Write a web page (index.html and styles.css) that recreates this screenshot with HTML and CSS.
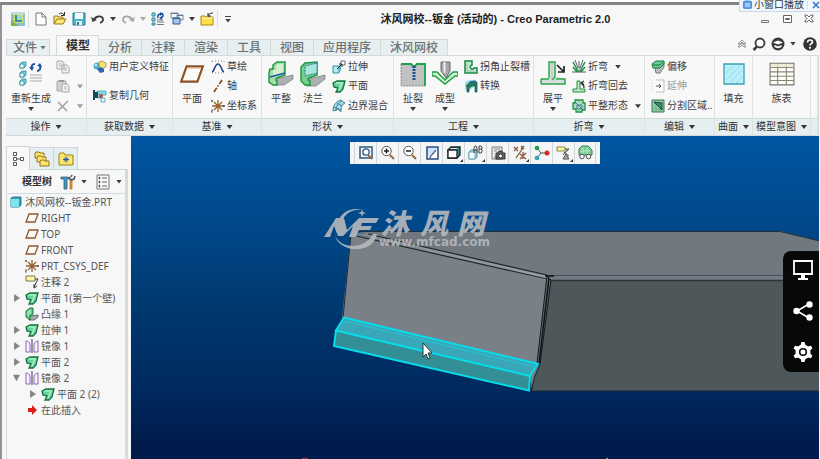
FILE: index.html
```html
<!DOCTYPE html>
<html lang="zh-CN">
<head>
<meta charset="utf-8">
<title>沐风网校--钣金 (活动的) - Creo Parametric 2.0</title>
<link rel="stylesheet" href="styles.css">
</head>
<body>
<svg class="sprite" aria-hidden="true">
  <defs>
    <symbol id="i-app" viewBox="0 0 14 14"><rect width="14" height="14" rx="1" fill="#8cc0dc"/><path d="M0 14V8l8 6z" fill="#7ab648"/><path d="M0 0h14v2H0z" fill="#b9dcea"/><rect x="3" y="2" width="9" height="9" fill="#d9e56a"/><path d="M4 3h2v5h5v2H4z" fill="#3d8f9a"/><path d="M6 3h5v5H6z" fill="#a7d2d0"/></symbol>
    <symbol id="i-new" viewBox="0 0 14 14"><path d="M2 1h6l4 4v8H2z" fill="#fff" stroke="#777"/><path d="M8 1v4h4" fill="none" stroke="#777"/></symbol>
    <symbol id="i-open" viewBox="0 0 14 14"><path d="M1 12V4h4l1 1h4v2" fill="#f5e27a" stroke="#9a7a1c"/><path d="M1 12l3-5h9l-3 5z" fill="#ffe873" stroke="#9a7a1c"/><path d="M6 2c2-1.500 4-1 5 1M11.500 0v3.500H8" fill="none" stroke="#333"/></symbol>
    <symbol id="i-save" viewBox="0 0 14 14"><path d="M1 1h12v12H1z" fill="#49b5c6" stroke="#2c7c8d"/><path d="M3 1h8v6H3z" fill="#f4fbfc"/><path d="M4 9h6v4H4z" fill="#e7eef0"/><path d="M5 10h2v3H5z" fill="#2c7c8d"/></symbol>
    <symbol id="i-undo" viewBox="0 0 14 14"><path d="M3 8c1-4 8-5 9-1 .500 2-1 3-3 4" fill="none" stroke="currentColor" stroke-width="1.800"/><path d="M0 5l1.500 5L6 8z" fill="currentColor"/></symbol>
    <symbol id="i-regen-sm" viewBox="0 0 14 14"><path d="M1 1h3v3H1zM1 6h3v3H1zM1 11h3v2H1z" fill="#a8e4ec" stroke="#2a7f93"/><path d="M6 8h6M6 10h7M6 12.500h7" stroke="#777"/><path d="M7 6c-1-3 1-4 3-4M11 1c2 2 1 4-1 5" fill="none" stroke="#174f9e" stroke-width="1.500"/><path d="M9 0l3 2-3 2zM11 4l-3 2 3 2z" fill="#174f9e"/></symbol>
    <symbol id="i-windows" viewBox="0 0 14 14"><path d="M1 1h7v5H1zM7 3h6v5H7z" fill="#f2f5f8" stroke="#7c8896"/><path d="M1 1h7v1H1zM7 3h6v1H7z" fill="#68798c"/><path d="M3 6h7v6H3z" fill="#a4c6ea" stroke="#2c5c96"/><path d="M3 6h7v1H3z" fill="#2c5c96"/></symbol>
    <symbol id="i-closefolder" viewBox="0 0 14 14"><path d="M1 4h4l1 1h7v8H1z" fill="#ffe04b" stroke="#a98514"/><path d="M2 7l2-1h9" stroke="#fff6b5" fill="none"/><path d="M8 5c0-3 2-4 5-4M8 1v3h3" fill="none" stroke="#333"/></symbol>
    <symbol id="i-tv" viewBox="0 0 12 12"><path d="M3 0l2 2M9 0L7 2" stroke="#4b87c8" fill="none"/><rect x="1" y="2" width="10" height="9" rx="2" fill="#4d93dc"/><rect x="3" y="4" width="6" height="5" fill="#9cc8f2"/></symbol>
    <symbol id="i-search" viewBox="0 0 14 14"><circle cx="8" cy="6" r="4.500" fill="#fff" stroke="#3c3c3c" stroke-width="1.800"/><path d="M5 9.500l-3.500 3.500" stroke="#3c3c3c" stroke-width="2.500"/></symbol>
    <symbol id="i-learn" viewBox="0 0 14 14"><circle cx="7" cy="7" r="6.500" fill="#3a3a3a"/><path d="M2 5.500l5-2 5 2-5 2z" fill="#fff"/><path d="M3.500 8v2c2 1.500 5 1.500 7 0V8L7 9.500z" fill="#fff"/></symbol>
    <symbol id="i-help" viewBox="0 0 14 14"><circle cx="7" cy="7" r="6.800" fill="#333"/><path d="M4.500 5.500c0-3.500 5-3 5-.500 0 1.500-2.500 1.700-2.500 3.500" fill="none" stroke="#fff" stroke-width="1.700"/><circle cx="7" cy="10.800" r="1.100" fill="#fff"/></symbol>
    <symbol id="i-regen" viewBox="0 0 26 26"><g stroke="#2a8598" stroke-width=".8"><path d="M2 3l2-2h4v4L6 7H2z" fill="#79dbe6"/><path d="M2 3h4v4H2z" fill="#eafcff"/><path d="M2 12l2-2h4v4l-2 2H2z" fill="#79dbe6"/><path d="M2 12h4v4H2z" fill="#eafcff"/><path d="M2 20l2-2h4v4l-2 2H2z" fill="#79dbe6"/><path d="M2 20h4v4H2z" fill="#eafcff"/></g><path d="M12 14h12M12 17h12M12 20h12" stroke="#a5abb2"/><path d="M14 8c-1-3 0-5 3-5M22 4c1 3 0 6-3 6" fill="none" stroke="#174fa4" stroke-width="2"/><path d="M11 6l3 4 2-4zM24 6l-2-4-3 3z" fill="#174fa4"/></symbol>
    <symbol id="i-copy" viewBox="0 0 14 14"><path d="M1 1h5l2 2v6H1zM6 5h5l2 2v6H6z" fill="#f1f1f1" stroke="#a9a9a9"/><path d="M3 4h3M3 6h3M8 8h3M8 10h3" stroke="#b5b5b5"/></symbol>
    <symbol id="i-paste" viewBox="0 0 14 14"><path d="M1 2h9v10H1z" fill="#d2d2d2" stroke="#a6a6a6"/><path d="M3 1h5v2H3z" fill="#999"/><path d="M6 5h5l2 2v6H6z" fill="#f4f4f4" stroke="#a6a6a6"/><path d="M8 8h3M8 10h3" stroke="#b5b5b5"/></symbol>
    <symbol id="i-del" viewBox="0 0 14 14"><path d="M2 3l9 9M12 2L2 12" stroke="#9f9f9f" stroke-width="1.500"/></symbol>
    <symbol id="i-udf" viewBox="0 0 14 14"><circle cx="4" cy="6" r="3.500" fill="#49b2cd"/><circle cx="3" cy="5" r="1.300" fill="#bdebf5"/><path d="M6 2l3-1 4 2v4L9 9 6 7z" fill="#f3df72" stroke="#998224" stroke-width=".7"/><path d="M4 9l4-2 3 2v3l-4 1z" fill="#2f67b2"/></symbol>
    <symbol id="i-copygeo" viewBox="0 0 14 14"><path d="M4 2h9v4H9v3H4z" fill="#7fdbe6" stroke="#4a9cab" stroke-width=".8"/><path d="M0 1h2v10H0zM2 3h3v6H2z" fill="#17465c"/><path d="M6 5l3 3M9 5v3H6" stroke="#bb3f2f" stroke-width="1.300" fill="none"/><path d="M8 9h4v4H8z" fill="#dff8fb" stroke="#4a9cab" stroke-width=".8"/></symbol>
    <symbol id="i-plane" viewBox="0 0 24 18"><path d="M7 2h15l-5 14H2z" fill="#fdfbf8" stroke="#8c5226" stroke-width="2"/><path d="M8 3.500h12" stroke="#d7ab84"/></symbol>
    <symbol id="i-sketch" viewBox="0 0 14 14"><path d="M1 1h12M1 13h12M1 1v3M13 1v3" stroke="#888" stroke-dasharray="1 2"/><path d="M1 12C3 12 4 4 7 4s4 8 6 8" fill="none" stroke="#1c3f88" stroke-width="1.500"/></symbol>
    <symbol id="i-axis" viewBox="0 0 14 14"><path d="M3 13L11 1" stroke="#8d5427" stroke-width="1.800" stroke-dasharray="5 1.500 1.500 1.500"/></symbol>
    <symbol id="i-csys" viewBox="0 0 14 14"><path d="M7 1v12M1 7h12M3 3l8 8M11 3l-8 8" stroke="#94602f" stroke-width="1.300"/><path d="M0 1l2 2M2 1L0 3M12 6l2 2M14 6l-2 2M0 11h2l-2 2h2" stroke="#555" stroke-width=".8" fill="none"/></symbol>
    <symbol id="i-flat" viewBox="0 0 26 26"><path d="M8 18l17-4v4l-9 6H5z" fill="#aeb1b2" stroke="#737777" stroke-width=".7"/><path d="M2 8h3V4l4-3h8v13l-8 3c-2 1-1 3 0 3v4H5l-4-3v-9z" fill="#a4dfa9" stroke="#209a49" stroke-width="1.500"/><path d="M5 9h3V5l2-2h5v10L5 16z" fill="#d3f0d0"/><path d="M2 16l15-4" stroke="#2158a1" stroke-width="1.500"/></symbol>
    <symbol id="i-flange" viewBox="0 0 26 26"><path d="M9 18l16-4v4l-9 7H6z" fill="#aeb1b2" stroke="#737777" stroke-width=".7"/><path d="M1 6l4-4 12-1v13l-8 3c-2 1-1 3 1 3v4H5l-4-4z" fill="#79cf8a" stroke="#209a49" stroke-width="1.500"/><path d="M5 5l12-3v10L5 15z" fill="#a7e7dc" stroke="#2f78a7" stroke-dasharray="2 1"/></symbol>
    <symbol id="i-extrude" viewBox="0 0 14 14"><path d="M1 6h6v7H1z" fill="#b8ebf1" stroke="#2f8fa1"/><path d="M7 6l2-2v6l-2 3z" fill="#50b4c4"/><path d="M9 1h4v4H9z" fill="#fff" stroke="#667"/><path d="M5 9l5-5M7 4h3v3" fill="none" stroke="#333"/></symbol>
    <symbol id="i-planar" viewBox="0 0 14 14"><path d="M1 4l4-2h8l-2 8-3 3H4l2-4-4-1z" fill="#6cd49a" stroke="#14713f" stroke-width="1.300"/><path d="M4 4h6L7 11" fill="none" stroke="#a8efc4" stroke-width="1.500"/></symbol>
    <symbol id="i-blend" viewBox="0 0 14 14"><path d="M1 12C1 6 4 2 9 1l4 3c-3 1-4 4-4 9L6 10z" fill="#a9dfeb" stroke="#4b8798"/><path d="M4 12c0-5 2-8 6-10M2 8l7 3M5 4l5 3" stroke="#37819b" fill="none"/></symbol>
    <symbol id="i-rip" viewBox="0 0 26 26"><path d="M1 3h11l2 3 2-3h9v22H1z" fill="#bfc1c2" stroke="#8a8e8e" stroke-dasharray="2 1"/><path d="M1 3h10l3 3 3-3h8v22" fill="none" stroke="#1ca24a" stroke-width="1.800"/><path d="M14 5v14" fill="none" stroke="#1d5190" stroke-width="3" stroke-dasharray="2 1"/></symbol>
    <symbol id="i-form" viewBox="0 0 26 26"><path d="M9 1h9v9l-4 7-5-7z" fill="#a4a8ab" stroke="#62676b"/><path d="M12.500 1v11" stroke="#e8eaeb" stroke-width="2"/><path d="M0 11h5l8 8 8-8h5v4h-3l-10 8L3 15H0z" fill="#d5f1ce" stroke="#1c9d47" stroke-width="1.500"/></symbol>
    <symbol id="i-corner" viewBox="0 0 14 14"><path d="M1 1h7v4a2 2 0 1 0 2 3h3v5H1z" fill="#c7e8cb" stroke="#168843" stroke-width="1.500"/><path d="M3 3v8h8" fill="none" stroke="#a5bbac"/></symbol>
    <symbol id="i-convert" viewBox="0 0 14 14"><path d="M1 3l4-2h5v7l-4 3H1z" fill="#9de0e9"/><path d="M2 7l4-4h7v10h-2V7H8L5 9v4H3V8z" fill="#257d60" stroke="#1a5345" stroke-width=".7"/><path d="M6 3l6-1" stroke="#2b67a8" stroke-width="1.500"/></symbol>
    <symbol id="i-unbend" viewBox="0 0 26 26"><path d="M9 1h6v15l10 1v6H1v-6h8z" fill="#d9dddb"/><path d="M9 17V1h6v14c0 2-1 2-3 4M1 18h8M1 23h24v-5h-9M1 18v5" fill="none" stroke="#2aa94c" stroke-width="1.500"/><path d="M12 2v16" stroke="#a7b1ab" stroke-dasharray="2 1"/><path d="M17 4l6 6M24 5v6h-6" fill="none" stroke="#222" stroke-width="1.700"/></symbol>
    <symbol id="i-bend" viewBox="0 0 14 14"><path d="M1 2l5 9h2l5-9M1 7l4 5M13 7l-4 5" fill="none" stroke="#258c49" stroke-width="1.500"/><path d="M7 1v8M3 0l3 8M11 0L8 8M0 12h14" stroke="#4e646c" fill="none"/></symbol>
    <symbol id="i-bendback" viewBox="0 0 14 14"><path d="M5 2h3v8h5v3H1v-3h4z" fill="#c2e5c8" stroke="#1d8f45"/><path d="M12 9c0-3-1-5-3-5M12 2L9 4l3 3" fill="none" stroke="#333" stroke-width="1.300"/></symbol>
    <symbol id="i-flatpat" viewBox="0 0 14 14"><path d="M3 1h8v3h2v7h-3v2H4v-3H1V4h2z" fill="#a9deb8" stroke="#21924a" stroke-width="1.300"/><path d="M3 3l8 8M5 6h5v4H5z" stroke="#4479a3" fill="none"/></symbol>
    <symbol id="i-offset" viewBox="0 0 14 14"><path d="M4 9l2-2h3l4-4v4l-4 6H5z" fill="#b9bebe" stroke="#737b7b"/><path d="M1 4l4-3h8v3L9 8H2z" fill="#69d094" stroke="#147241"/><path d="M2 5h7l3-3" fill="none" stroke="#147241"/></symbol>
    <symbol id="i-extend" viewBox="0 0 14 14"><path d="M5 1h8v12H5" fill="#fafafa" stroke="#c0c0c0"/><path d="M1 1v12" stroke="#ccc" stroke-dasharray="1 2"/><path d="M5 7h5M8 5l2 2-2 2" fill="none" stroke="#555"/></symbol>
    <symbol id="i-split" viewBox="0 0 14 14"><path d="M1 1h12v12H1z" fill="#82d3a1" stroke="#38765a"/><path d="M5 1v12M9 1v12M1 4h12M1 10h12" stroke="#6d8b7d" stroke-dasharray="1 1"/><path d="M3 3l8 1v7z" fill="#3a8a68" stroke="#244f47"/></symbol>
    <symbol id="i-fill" viewBox="0 0 22 22"><path d="M1 1h20v20H1z" fill="#b9effa" stroke="#3a9fb8" stroke-width="1.300"/><path d="M3 10l7-7M3 17L17 3M7 19L19 7M13 20l7-7" stroke="#8edbea"/></symbol>
    <symbol id="i-table" viewBox="0 0 24 24"><path d="M1 2h22v20H1z" fill="#fffef6" stroke="#747468"/><path d="M1 6h22M1 10h22M1 14h22M1 18h22M8 2v20M16 2v20" stroke="#86867b" fill="none"/><path d="M2 3h20v2H2z" fill="#e9e6c6"/></symbol>
    <symbol id="i-tree" viewBox="0 0 14 14"><path d="M2.500.5h3v3h-3zM2.500 5.500h3v3h-3zM9.500 5.500h3v3h-3zM2.500 10.500h3v3h-3z" fill="#fff" stroke="#555"/><path d="M6 7h3" stroke="#555"/></symbol>
    <symbol id="i-folders" viewBox="0 0 16 16"><g fill="#ffe36a" stroke="#8e7420"><path d="M1 2l1-1h3l1 1h4v5H1z"/><path d="M3 6l1-1h3l1 1h4v5H3z"/><path d="M6 10l1-1h3l1 1h4v5H6z"/></g></symbol>
    <symbol id="i-fav" viewBox="0 0 16 16"><path d="M1 3l1-1h4l1 2h8v10H1z" fill="#ffe869" stroke="#9b8020"/><path d="M8 5.500v6M5 8.500h6M6 6.500l4 4M10 6.500l-4 4" stroke="#2554b0"/></symbol>
    <symbol id="i-tools" viewBox="0 0 16 16"><path d="M1 3h7l2 2H7v10H4V5H1z" fill="#4098c4" stroke="#41586d" stroke-width=".8"/><path d="M10 6h2v9h-2z" fill="#f29a28" stroke="#a86213" stroke-width=".7"/><path d="M9 3l2 3 3-1 1-3M12 1l-1 2" fill="none" stroke="#565b60" stroke-width="1.600"/></symbol>
    <symbol id="i-list" viewBox="0 0 16 16"><path d="M2 1h12v14H2z" fill="#f7f7f7" stroke="#777"/><path d="M7 4h5M7 8h5M7 12h5" stroke="#666"/><path d="M4 3h1v2H4zM4 7h1v2H4zM4 11h1v2H4z" fill="#333" stroke="#555" stroke-width=".5"/></symbol>
    <symbol id="i-part" viewBox="0 0 14 14"><path d="M2 3l2-1h8v8l-2 2H2z" fill="#3a9cb2" stroke="#2a7f92"/><path d="M2 4h8v8H2z" fill="#7ce3f0"/></symbol>
    <symbol id="i-datum" viewBox="0 0 14 14"><path d="M4 3h9l-3 8H1z" fill="#fffdf9" stroke="#8e572e" stroke-width="1.300"/></symbol>
    <symbol id="i-note" viewBox="0 0 14 14"><path d="M1 1h9v5H1z" fill="#faf7a6" stroke="#7c7a4a"/><path d="M10 4h3l-4 8M9 9v4l3-2" fill="none" stroke="#333"/></symbol>
    <symbol id="i-bulge" viewBox="0 0 14 14"><path d="M5 9l8-1v2l-4 3H4z" fill="#a8adad" stroke="#606969"/><path d="M1 4l4-3h3v6L5 9v4L1 10z" fill="#62c888" stroke="#177641"/><path d="M3 4v5M5 3v4" stroke="#d3f4da"/></symbol>
    <symbol id="i-mirror" viewBox="0 0 14 14"><path d="M1 2c2 0 3 1 4 3v8H1zM13 2c-2 0-3 1-4 3v8h4z" fill="#f8f2fc" stroke="#8c60b1"/><path d="M7 0v14" stroke="#5d6470" stroke-width="1.300"/></symbol>
    <symbol id="i-insert" viewBox="0 0 14 14"><path d="M3 5h4V2l5 5-5 5V9H3z" fill="#d82019"/></symbol>
    <symbol id="v-fit" viewBox="0 0 16 16"><path d="M2 2h12v11H2z" fill="#f4f8fc" stroke="#31577d" stroke-width="1.500"/><circle cx="8" cy="7" r="3.200" fill="#fff" stroke="#31577d" stroke-width="1.300"/><path d="M10 10l4 4" stroke="#9d683b" stroke-width="2"/></symbol>
    <symbol id="v-in" viewBox="0 0 16 16"><circle cx="6.500" cy="6" r="4.700" fill="#fff" stroke="#555"/><path d="M4 6h5M6.500 3.500v5" stroke="#222" stroke-width="1.500"/><path d="M10 10l4 4" stroke="#9d683b" stroke-width="2"/></symbol>
    <symbol id="v-out" viewBox="0 0 16 16"><circle cx="6.500" cy="6" r="4.700" fill="#fff" stroke="#555"/><path d="M4 6h5" stroke="#222" stroke-width="1.500"/><path d="M10 10l4 4" stroke="#9d683b" stroke-width="2"/></symbol>
    <symbol id="v-repaint" viewBox="0 0 16 16"><path d="M3 2h11v12H3z" fill="#cfe4fa" stroke="#2c4d80" stroke-width="1.500"/><path d="M4 11l6-3 3-4v9H4z" fill="#fff"/><path d="M6 12l6-7M5 13h2" stroke="#5e6e91" stroke-width="1.500"/></symbol>
    <symbol id="v-style" viewBox="0 0 16 16"><path d="M2 5l3-3h9v8l-3 3H2z" fill="#298b99" stroke="#222" stroke-width="1.300"/><path d="M2 5h9v8H2z" fill="#fff" stroke="#222" stroke-width="1.300"/><path d="M4 4l1-1h7l-1 1z" fill="#c6edf0"/></symbol>
    <symbol id="v-saved" viewBox="0 0 16 16"><path d="M1 7l2-2h6v7l-2 2H1z" fill="#a0dce5" stroke="#4c93a1"/><path d="M1 7h6v7H1z" fill="#fafdff" stroke="#6aa6b4"/><path d="M6 8V3l1-2h1l1 2v5M6 5h3M11 8V1h2l1 1v2h-3M13 4l1 1v2l-1 1h-2" fill="none" stroke="#444"/></symbol>
    <symbol id="v-camera" viewBox="0 0 16 16"><path d="M2 2h10v12H2z" fill="#eee" stroke="#777"/><path d="M4 4h6M4 6h3M4 12h3" stroke="#888"/><path d="M6 8h2l1-2h3l1 2h2v6H6z" fill="#666" stroke="#333"/><circle cx="10.500" cy="11" r="2" fill="#fff" stroke="#333"/></symbol>
    <symbol id="v-datum" viewBox="0 0 16 16"><path d="M2 2l4 4M6 2L2 6M9 1l3 3M12 1l-3 3M4 13L11 3M8 9l6 5M14 8l-6 6M11 7v7" stroke="#8b5635" stroke-width="1.300"/></symbol>
    <symbol id="v-spin" viewBox="0 0 16 16"><path d="M3 3l4 5M3 13l4-5h6" stroke="#555" fill="none"/><circle cx="3" cy="3" r="2.300" fill="#1f9c4c"/><circle cx="3" cy="13" r="2.300" fill="#2da6bb"/><circle cx="13" cy="8" r="2.500" fill="#d62626"/></symbol>
    <symbol id="v-annot" viewBox="0 0 16 16"><path d="M1 2h8v4H1z" fill="#fbf6a0" stroke="#8b874a"/><path d="M9 4h4L7 10M8 7l5 4M7 14h6l-3-5z" fill="#aaa" stroke="#555"/></symbol>
    <symbol id="v-glass" viewBox="0 0 16 16"><path d="M2 4l3-3h6l4 4v5H2z" fill="#7ed098" stroke="#29814a"/><path d="M3 6h10M6 2v7M10 2v7" stroke="#b5e4c3"/><circle cx="5" cy="11.500" r="2.300" fill="#eee" stroke="#555"/><circle cx="11.500" cy="11.500" r="2.300" fill="#eee" stroke="#555"/></symbol>
  </defs>
</svg>

<div class="app">
  <header class="titlebar">
    <div class="quick">
      <svg class="i14"><use href="#i-app"/></svg>
      <span class="sep"></span>
      <button aria-label="新建"><svg class="i14"><use href="#i-new"/></svg></button>
      <button aria-label="打开"><svg class="i14"><use href="#i-open"/></svg></button>
      <button aria-label="保存"><svg class="i14"><use href="#i-save"/></svg></button>
      <button aria-label="撤消"><svg class="i14"><use href="#i-undo"/></svg><i class="caret"></i></button>
      <button class="redo" aria-label="重做"><svg class="i14 flip"><use href="#i-undo"/></svg><i class="caret"></i></button>
      <button aria-label="重新生成"><svg class="i14"><use href="#i-regen-sm"/></svg></button>
      <button aria-label="窗口"><svg class="i14"><use href="#i-windows"/></svg><i class="caret"></i></button>
      <button aria-label="关闭"><svg class="i14"><use href="#i-closefolder"/></svg></button>
      <span class="sep"></span>
      <button class="more" aria-label="自定义"><i class="caret"></i></button>
    </div>
    <h1>沐风网校--钣金 (活动的) - Creo Parametric 2.0</h1>
    <div class="winctl">
      <button aria-label="最小化"><svg class="i10" viewBox="0 0 10 10"><path d="M1.500 6.500h7v2h-7z" fill="#fff" stroke="#777"/></svg></button>
      <button aria-label="还原"><svg class="i10" viewBox="0 0 10 10"><path d="M1.500 1.500h8v7h-8zM3.500 4.500h4v1h-4z" fill="#fff" stroke="#666"/></svg></button>
      <button aria-label="关闭窗口"><svg class="i10" viewBox="0 0 10 10"><path d="M1 1h2l2 2 2-2h2v1L7 4.500 9 7v1H7L5 6 3 8H1V7l2-2.500L1 2z" fill="#fff" stroke="#666"/></svg></button>
    </div>
  </header>

  <nav class="tabs">
    <button class="file">文件<i class="caret"></i></button>
    <button class="active">模型</button>
    <button>分析</button><button>注释</button><button>渲染</button><button>工具</button><button>视图</button><button>应用程序</button><button>沐风网校</button>
    <div class="helpers">
      <button aria-label="收起"><svg class="i10" viewBox="0 0 10 10"><path d="M1 5l4-4 4 4H7L5 3 3 5zM1 8l4-4 4 4H7L5 6 3 8z" fill="#fff" stroke="#777" stroke-width=".8"/></svg></button>
      <button aria-label="搜索"><svg class="i14"><use href="#i-search"/></svg></button>
      <button aria-label="学习"><svg class="i14"><use href="#i-learn"/></svg><i class="caret"></i></button>
      <button aria-label="帮助"><svg class="i14"><use href="#i-help"/></svg></button>
    </div>
  </nav>

  <section class="ribbon">
    <div class="group">
      <div class="body">
        <button class="big wide"><svg class="i26"><use href="#i-regen"/></svg>重新生成<i class="caret"></i></button>
        <div class="col">
          <button aria-label="复制"><svg class="i14"><use href="#i-copy"/></svg></button>
          <button class="off" aria-label="粘贴"><svg class="i14"><use href="#i-paste"/></svg><i class="caret"></i></button>
          <button class="off" aria-label="删除"><svg class="i14"><use href="#i-del"/></svg><i class="caret"></i></button>
        </div>
      </div>
      <button class="name">操作<i class="caret"></i></button>
    </div>
    <div class="group">
      <div class="body">
        <div class="col two">
          <button><svg class="i14"><use href="#i-udf"/></svg>用户定义特征</button>
          <button><svg class="i14"><use href="#i-copygeo"/></svg>复制几何</button>
        </div>
      </div>
      <button class="name">获取数据<i class="caret"></i></button>
    </div>
    <div class="group">
      <div class="body">
        <button class="big"><svg class="i26"><use href="#i-plane"/></svg>平面</button>
        <div class="col">
          <button><svg class="i14"><use href="#i-sketch"/></svg>草绘</button>
          <button><svg class="i14"><use href="#i-axis"/></svg>轴</button>
          <button><svg class="i14"><use href="#i-csys"/></svg>坐标系</button>
        </div>
      </div>
      <button class="name">基准<i class="caret"></i></button>
    </div>
    <div class="group">
      <div class="body">
        <button class="big"><svg class="i26"><use href="#i-flat"/></svg>平整</button>
        <button class="big"><svg class="i26"><use href="#i-flange"/></svg>法兰</button>
        <div class="col">
          <button><svg class="i14"><use href="#i-extrude"/></svg>拉伸</button>
          <button><svg class="i14"><use href="#i-planar"/></svg>平面</button>
          <button><svg class="i14"><use href="#i-blend"/></svg>边界混合</button>
        </div>
      </div>
      <button class="name">形状<i class="caret"></i></button>
    </div>
    <div class="group">
      <div class="body">
        <button class="big"><svg class="i26"><use href="#i-rip"/></svg>扯裂<i class="caret"></i></button>
        <button class="big"><svg class="i26"><use href="#i-form"/></svg>成型<i class="caret"></i></button>
        <div class="col">
          <button><svg class="i14"><use href="#i-corner"/></svg>拐角止裂槽</button>
          <button><svg class="i14"><use href="#i-convert"/></svg>转换</button>
        </div>
      </div>
      <button class="name">工程<i class="caret"></i></button>
    </div>
    <div class="group">
      <div class="body">
        <button class="big"><svg class="i26"><use href="#i-unbend"/></svg>展平<i class="caret"></i></button>
        <div class="col">
          <button><svg class="i14"><use href="#i-bend"/></svg>折弯<i class="caret"></i></button>
          <button><svg class="i14"><use href="#i-bendback"/></svg>折弯回去</button>
          <button><svg class="i14"><use href="#i-flatpat"/></svg>平整形态<i class="caret"></i></button>
        </div>
      </div>
      <button class="name">折弯<i class="caret"></i></button>
    </div>
    <div class="group">
      <div class="body">
        <div class="col">
          <button><svg class="i14"><use href="#i-offset"/></svg>偏移</button>
          <button class="off"><svg class="i14"><use href="#i-extend"/></svg>延伸</button>
          <button><svg class="i14"><use href="#i-split"/></svg>分割区域..</button>
        </div>
      </div>
      <button class="name">编辑<i class="caret"></i></button>
    </div>
    <div class="group">
      <div class="body center"><button class="big"><svg class="i26 inset"><use href="#i-fill"/></svg>填充</button></div>
      <button class="name">曲面<i class="caret"></i></button>
    </div>
    <div class="group">
      <div class="body center"><button class="big"><svg class="i26"><use href="#i-table"/></svg>族表</button></div>
      <button class="name">模型意图<i class="caret"></i></button>
    </div>
    <div class="group"><div class="body"></div><div class="name"></div></div>
  </section>

  <main class="work">
    <aside class="side">
      <div class="sidetabs">
        <button class="active" aria-label="模型树"><svg class="i14"><use href="#i-tree"/></svg></button>
        <button aria-label="文件夹浏览器"><svg class="i16"><use href="#i-folders"/></svg></button>
        <button aria-label="收藏夹"><svg class="i16"><use href="#i-fav"/></svg></button>
      </div>
      <div class="panel">
        <div class="panelhead">
          <h2>模型树</h2>
          <button aria-label="设置"><svg class="i16"><use href="#i-tools"/></svg><i class="caret"></i></button>
          <button aria-label="显示"><svg class="i16"><use href="#i-list"/></svg><i class="caret"></i></button>
        </div>
        <ul class="tree">
          <li class="root"><svg class="i14"><use href="#i-part"/></svg>沐风网校--钣金.PRT</li>
          <li><i></i><svg class="i14"><use href="#i-datum"/></svg>RIGHT</li>
          <li><i></i><svg class="i14"><use href="#i-datum"/></svg>TOP</li>
          <li><i></i><svg class="i14"><use href="#i-datum"/></svg>FRONT</li>
          <li><i></i><svg class="i14"><use href="#i-csys"/></svg>PRT_CSYS_DEF</li>
          <li><i></i><svg class="i14"><use href="#i-note"/></svg>注释 2</li>
          <li><i class="shut"></i><svg class="i14"><use href="#i-planar"/></svg>平面 1(第一个壁)</li>
          <li><i></i><svg class="i14"><use href="#i-bulge"/></svg>凸缘 1</li>
          <li><i class="shut"></i><svg class="i14"><use href="#i-planar"/></svg>拉伸 1</li>
          <li><i class="shut"></i><svg class="i14"><use href="#i-mirror"/></svg>镜像 1</li>
          <li><i class="shut"></i><svg class="i14"><use href="#i-planar"/></svg>平面 2</li>
          <li><i class="open"></i><svg class="i14"><use href="#i-mirror"/></svg>镜像 2</li>
          <li class="child"><i class="shut"></i><svg class="i14"><use href="#i-planar"/></svg>平面 2 (2)</li>
          <li><i></i><svg class="i14"><use href="#i-insert"/></svg>在此插入</li>
        </ul>
      </div>
    </aside>

    <section class="view">
      <svg class="scene" viewBox="131 136 688 323" preserveAspectRatio="xMinYMin slice">
        <defs>
          <linearGradient id="bevel" x1="0" y1="0" x2="0" y2="1"><stop offset="0" stop-color="#848b93"/><stop offset="1" stop-color="#9aa1aa"/></linearGradient>
        </defs>
        <path d="M354 231H780L820 241V278H547z" fill="#717880"/>
        <path d="M352 231.500H780L820 241" fill="none" stroke="#22303c"/>
        <path d="M547 275H820V282H547z" fill="#747a83"/>
        <path d="M547 275.500H820" stroke="#454c53"/>
        <path d="M547 281H820V391H532z" fill="#4e5759"/>
        <path d="M551 280.500H820" stroke="#2e3338" stroke-width="1.500"/>
        <path d="M532 391H820" stroke="#182a3c"/>
        <path d="M351 233L547 278 538 365 342 318z" fill="#7a8088"/>
        <path d="M352 233l20 1 175 42-1 4z" fill="url(#bevel)"/>
        <path d="M368 234l179 41M352 235l195 44" fill="none" stroke="#22262b" stroke-width="1.200"/>
        <path d="M351 234l-8 84" stroke="#1c2935"/>
        <path d="M547 276l-10 87 3 1 11-84z" fill="#646b71" stroke="#15191c"/>
        <path d="M549 278l-10 86M545 276h9" stroke="#101315" stroke-width="1.500"/>
        <path d="M538 365l2-1-5 12-4 15-1-15z" fill="#747b83" stroke="#10212e"/>
        <path d="M344 317.500L538 364 530 376 336 330.500z" fill="#39a7b7"/>
        <path d="M336 330.500L530 376 529 390.500 334 346z" fill="#348e96"/>
        <path d="M344 317.500L538 364 530 376 336 330.500zM336 330.500L530 376 529 390.500 334 346z" fill="none" stroke="#08dcea" stroke-width="2"/>
        <path d="M344 321L535 367" stroke="#22c6d6"/>
        <path d="M302 459l3-1 3 1" stroke="#c0383c" fill="none"/><path d="M606 459l2-1" stroke="#c9c24a"/>
        <g class="mark">
          <path d="M339 219c5-9 14-12 24-9-9-1-16 2-20 9z"/>
          <path d="M336 218h8l3 12 12-12h20l-3 5h-14l-1 3h11l-2 4h-11l-3 7h-7l4-11-10 10h-5l-4-10-4 11h-6z"/>
          <path d="M335 236c7 14 30 13 38-2h4c-4 21-37 19-42 2z"/>
          <path d="M362 209l1 3 3 1-3 1-1 3-1-3-3-1 3-1z"/>
          <text class="brand" x="381" y="234">沐</text><text class="brand" x="420" y="234">风</text><text class="brand" x="457" y="234">网</text>
          <text class="url" x="379" y="246">www.mfcad.com</text>
        </g>
        <path d="M423 343v14l3-3 2 5 2-1-2-5h4z" fill="#fff" stroke="#222" stroke-width=".9"/>
      </svg>
      <div class="gfx">
        <button aria-label="重新调整"><svg class="i16"><use href="#v-fit"/></svg></button>
        <button aria-label="放大"><svg class="i16"><use href="#v-in"/></svg></button>
        <button aria-label="缩小"><svg class="i16"><use href="#v-out"/></svg></button>
        <button aria-label="重画"><svg class="i16"><use href="#v-repaint"/></svg></button>
        <button class="drop" aria-label="显示样式"><svg class="i16"><use href="#v-style"/></svg></button>
        <button class="drop" aria-label="已保存方向"><svg class="i16"><use href="#v-saved"/></svg></button>
        <button aria-label="视图管理器"><svg class="i16"><use href="#v-camera"/></svg></button>
        <button class="drop" aria-label="基准显示"><svg class="i16"><use href="#v-datum"/></svg></button>
        <button aria-label="旋转中心"><svg class="i16"><use href="#v-spin"/></svg></button>
        <button class="drop" aria-label="注释显示"><svg class="i16"><use href="#v-annot"/></svg></button>
        <button aria-label="检查"><svg class="i16"><use href="#v-glass"/></svg></button>
      </div>
      <div class="dock">
        <button aria-label="屏幕"><svg class="i20" viewBox="0 0 20 20"><path d="M1 1h18v13H1z" fill="none" stroke="#fff" stroke-width="1.800"/><path d="M1 13h18v2H1zM8 15h4v3H8z" fill="#fff"/><path d="M5 18h10v2H5z" fill="#fff"/></svg></button>
        <button aria-label="分享"><svg class="i20" viewBox="0 0 20 20"><path d="M16 3L4 10l12 7" fill="none" stroke="#fff" stroke-width="1.500"/><circle cx="16.500" cy="3.500" r="3.200" fill="#fff"/><circle cx="3.500" cy="10" r="3.200" fill="#fff"/><circle cx="16.500" cy="16.500" r="3.200" fill="#fff"/></svg></button>
        <button aria-label="设置"><svg class="i20" viewBox="0 0 20 20"><g fill="#fff"><circle cx="10" cy="10" r="7.500"/><path id="tooth" d="M7.500 4L8.500 0h3l1 4v12l-1 4h-3l-1-4z"/><use href="#tooth" transform="rotate(60 10 10)"/><use href="#tooth" transform="rotate(120 10 10)"/></g><circle cx="10" cy="10" r="3.300" fill="#fff" stroke="#0a0a0a" stroke-width="1.600"/></svg></button>
      </div>
    </section>
  </main>

  <div class="popout"><svg class="i11"><use href="#i-tv"/></svg><button>小窗口播放</button><button class="x" aria-label="关闭小窗口"><svg class="i8" viewBox="0 0 8 8"><path d="M1 1l6 6M7 1L1 7" stroke="#2f78c8" stroke-width="1.500"/></svg></button></div>
</div>
</body>
</html>
```
FILE: styles.css
```css
* { box-sizing: border-box; }
body { margin: 0; background: #fff; color: #3c3c3c; font: 10px/14px "Liberation Sans", "Noto Sans CJK SC", sans-serif; }
button { margin: 0; padding: 0; border: 0; background: none; color: inherit; font: inherit; display: flex; align-items: center; white-space: nowrap; }
h1, h2, ul { margin: 0; padding: 0; list-style: none; }
svg { display: block; flex: none; }
.sprite { position: absolute; width: 0; height: 0; }
.i8 { width: 8px; height: 8px; }
.i10 { width: 10px; height: 10px; }
.i11 { width: 11px; height: 11px; }
.i14 { width: 14px; height: 14px; }
.i16 { width: 16px; height: 16px; }
.i20 { width: 20px; height: 20px; }
.i26 { width: 26px; height: 26px; }
.inset { padding: 2px; }
.flip { transform: scaleX(-1); }
.caret { flex: none; width: 6px; height: 4px; background: currentColor; clip-path: polygon(0 0, 100% 0, 50% 100%); }

.app { position: relative; display: flex; flex-direction: column; min-height: 100vh; padding: 6px 1px 0 6px; background: linear-gradient(90deg, #939393 2px, #f7f7f7 2px); }
.app::before { content: ""; position: absolute; inset: 0 0 auto; height: 5px; background: linear-gradient(#fff 2px, #858585 2px); }

.titlebar { display: flex; align-items: center; height: 26px; padding: 0 5px; }
.quick { display: flex; align-items: center; gap: 5px; }
.quick button { gap: 5px; color: #3f3f3f; }
.quick .redo { color: #a9a9a9; }
.quick .sep { width: 1px; height: 18px; margin-left: -2px; background: #ddd; }
.quick .more { border-top: 1px solid #444; padding: 2px 0 0; margin-left: 2px; }
h1 { flex: 1; text-align: center; font-size: 11px; font-weight: 700; color: #222; white-space: nowrap; }
.winctl { display: flex; gap: 12px; }

.tabs { display: flex; align-items: flex-end; height: 23px; }
.tabs > button { height: 16px; padding: 0 9px; background: #e7eff0; border: solid #d2dadb; border-width: 1px 1px 0 0; color: #6b7376; font-size: 12px; font-weight: 500; }
.tabs > .file { width: 44px; margin-right: 6px; padding: 0 0 0 6px; gap: 3px; border-left-width: 1px; }
.tabs > .active { height: 20px; padding: 0 8px 0 9px; background: #f8f8f8; border-left-width: 1px; color: #333; font-weight: 700; }
.helpers { display: flex; align-items: center; gap: 5px; align-self: center; margin-left: auto; padding-right: 2px; }
.helpers button { gap: 5px; }
.helpers button:last-child { margin-left: 2px; }

.ribbon { display: grid; grid-template-columns: 81fr 86fr 89fr 132fr 140fr 111fr 70fr 38fr 58fr 7fr; border: 1px solid #d5dadb; border-width: 1px 1px 0 0; background: #f8f8f8; }
.group { display: flex; flex-direction: column; min-width: 0; border-right: 1px solid #dde2e3; }
.body { display: flex; height: 62px; padding: 1px 0 2px 3px; }
.body.center { justify-content: center; padding-left: 0; }
.big { flex-direction: column; width: 32px; padding-top: 4px; }
.big.wide { width: 44px; }
.big svg { margin-bottom: 5px; }
.big .caret { margin-top: 1px; }
.col { display: grid; grid-template-rows: repeat(3, 1fr); padding-left: 3px; }
.col.two { grid-template-rows: 1fr 2fr; }
.col button { gap: 2px; }
.col .caret { margin-left: 5px; }
.off { color: #9c9c9c; }
.name { display: flex; justify-content: center; align-items: center; gap: 5px; height: 18px; border: solid #d0d8da; border-width: 1px 0; background: #e5eef0; color: #333; }

.work { flex: 1; display: flex; }
.side { display: flex; flex-direction: column; width: 125px; padding: 10px 3px 0 0; }
.sidetabs { display: flex; align-items: flex-end; }
.sidetabs button { justify-content: center; width: 24px; height: 23px; border: solid #ccd5d7; border-width: 1px 1px 1px 0; background: #e5eef0; }
.sidetabs .active { height: 24px; border-width: 1px 1px 0; background: #f8f8f8; }
.sidetabs::after { content: ""; flex: 1; border-bottom: 1px solid #ccd5d7; }
.panel { flex: 1; border: solid #d3dcde; border-width: 0 3px 0 1px; }
.panelhead { display: flex; align-items: center; gap: 8px; height: 24px; padding-left: 15px; border-bottom: 1px solid #d3dcde; }
.panelhead h2 { font-size: 10px; font-weight: 700; color: #333; }
.panelhead button { gap: 5px; }
.tree { font-family: "Noto Sans", "Noto Sans CJK SC", sans-serif; color: #555; }
.tree li { display: flex; align-items: center; gap: 2px; height: 16px; padding-left: 6px; white-space: nowrap; }
.tree .root { padding-left: 2px; }
.tree .child { padding-left: 22px; }
.tree i { width: 7px; height: 8px; margin-right: 3px; }
.tree .shut { background: #848484; clip-path: polygon(15% 0, 100% 50%, 15% 100%); }
.tree .open { background: #848484; clip-path: polygon(0 10%, 100% 10%, 50% 90%); }

.view { position: relative; flex: 1; display: flex; justify-content: center; align-items: flex-start; padding-top: 6px; overflow: hidden; background: linear-gradient(#0055a2, #004788 30%, #003a72 50%, #002a60 78%, #001b4b 96%); }
.scene { position: absolute; inset: 0; width: 100%; height: 100%; }
.mark { fill: #b4b7bb; opacity: .92; }
.brand { font: italic 900 28px "Noto Sans CJK SC", sans-serif; }
.url { font: 700 12px "DejaVu Sans", sans-serif; }
.gfx { position: relative; display: flex; padding: 0 4px; background: #f3f5f6; }
.gfx button { position: relative; justify-content: center; width: 22px; height: 22px; border-left: 1px solid #d3d6d8; }
.gfx button:last-child { border-right: 1px solid #d3d6d8; }
.drop::after { content: ""; position: absolute; right: 1px; bottom: 2px; width: 3px; height: 3px; background: #333; clip-path: polygon(100% 0, 100% 100%, 0 100%); }
.dock { position: absolute; top: 115px; right: 0; display: flex; flex-direction: column; gap: 21px; padding: 9px 6px 10px 10px; border-radius: 8px 0 0 8px; background: rgba(5, 6, 6, .97); }
.popout { position: absolute; top: 0; right: 0; display: flex; align-items: center; gap: 1px; height: 12px; padding: 0 0 2px 2px; border: solid #c6d9ec; border-width: 0 0 1px 1px; background: #eff6fd; color: #333; }
.popout .x { margin-left: 2px; padding-left: 4px; border-left: 1px solid #d4e2f0; }
```
